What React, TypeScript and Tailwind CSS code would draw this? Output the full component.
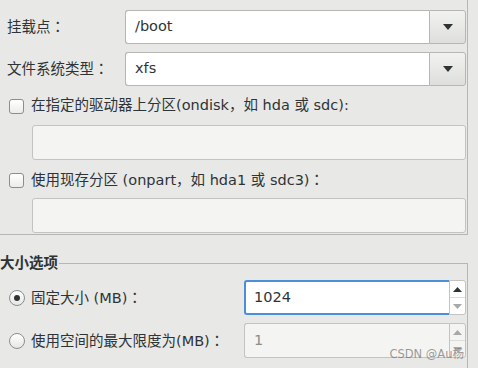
import React from "react";

const FONT = { fontFamily: '"DejaVu Sans", "Noto Sans CJK SC", sans-serif' };

function Colon() {
  return <span style={{ fontFamily: '"Noto Sans CJK TC", sans-serif' }}>：</span>;
}

function ComboArrow() {
  return (
    <svg width="10" height="6" viewBox="0 0 10 6">
      <path d="M0 0 H10 L5 6 Z" fill="#2e3436" />
    </svg>
  );
}

function Combo({ value }: { value: string }) {
  return (
    <div className="flex h-[34px] w-[341px]">
      <div className="flex-1 flex items-center pl-[9px] bg-white border border-[#b6b6b3] border-r-0 rounded-l-[3px] text-[#2e3436]">
        {value}
      </div>
      <div className="w-[37px] flex items-center justify-center border border-[#b6b6b3] rounded-r-[3px] bg-gradient-to-b from-[#f2f2f1] to-[#dededc]">
        <ComboArrow />
      </div>
    </div>
  );
}

function Checkbox() {
  return (
    <div className="w-[15px] h-[15px] rounded-[3px] border border-[#8b8e8f] bg-gradient-to-b from-white to-[#ececea] shrink-0" />
  );
}

function Radio({ checked }: { checked?: boolean }) {
  return (
    <div className="w-[16px] h-[16px] rounded-full border border-[#8b8e8f] bg-gradient-to-b from-white to-[#e6e6e4] shrink-0 flex items-center justify-center">
      {checked && <div className="w-[6px] h-[6px] rounded-full bg-[#2e3436]" />}
    </div>
  );
}

function Spin({ value, focused }: { value: string; focused?: boolean }) {
  return (
    <div className="flex h-[35px] w-[222px]">
      <div
        className={
          focused
            ? "flex-1 flex items-center pl-[8px] bg-white border-2 border-r-0 border-[#4a90d9] rounded-l-[3px] text-[#2e3436]"
            : "flex-1 flex items-center pl-[9px] bg-[#f4f4f3] border border-r-0 border-[#c3c3c0] rounded-l-[3px] text-[#8b8e8f]"
        }
      >
        {value}
      </div>
      <div
        className={
          focused
            ? "w-[17px] flex flex-col border border-[#c3c3c0] rounded-r-[3px] bg-white"
            : "w-[17px] flex flex-col border border-[#c3c3c0] rounded-r-[3px] bg-[#f4f4f3]"
        }
      >
        <div className="flex-1 flex items-center justify-center border-b border-[#dcdcda]">
          <svg width="9" height="5" viewBox="0 0 9 5">
            <path d="M0 5 H9 L4.5 0 Z" fill={focused ? "#2e3436" : "#a8a8a6"} />
          </svg>
        </div>
        <div className="flex-1 flex items-center justify-center">
          <svg width="9" height="5" viewBox="0 0 9 5">
            <path d="M0 0 H9 L4.5 5 Z" fill="#a8a8a6" />
          </svg>
        </div>
      </div>
    </div>
  );
}

export default function App() {
  return (
    <div
      className="relative w-[478px] h-[368px] overflow-hidden bg-[#e8e8e7] text-[14.5px] text-[#2e3436]"
      style={FONT}
    >
      <div className="w-[468px] h-[235px] border-r border-b border-[#b6b6b3] pt-[10px] pr-[1px] flex flex-col">
        <div className="flex items-center justify-between pl-[7px]">
          <span>挂载点<Colon /></span>
          <Combo value="/boot" />
        </div>
        <div className="flex items-center justify-between pl-[7px] mt-[8px]">
          <span>文件系统类型<Colon /></span>
          <Combo value="xfs" />
        </div>
        <div className="flex items-center gap-[7px] pl-[9px] h-[20px] mt-[10px]">
          <Checkbox />
          <span>在指定的驱动器上分区(ondisk，如 hda 或 sdc):</span>
        </div>
        <div className="ml-[32px] mt-[9px] h-[35px] bg-[#f4f4f3] border border-[#c3c3c0] rounded-[3px]" />
        <div className="flex items-center gap-[7px] pl-[9px] h-[20px] mt-[10px]">
          <Checkbox />
          <span>使用现存分区 (onpart，如 hda1 或 sdc3)<Colon /></span>
        </div>
        <div className="ml-[32px] mt-[8px] h-[35px] bg-[#f4f4f3] border border-[#c3c3c0] rounded-[3px]" />
      </div>

      <div className="w-[468px] mt-[18px]">
        <div className="flex h-[20px]">
          <span className="font-bold leading-[20px] pr-[1px]">大小选项</span>
          <div className="flex-1 self-end h-[10px] border-t border-r border-[#b6b6b3]" />
        </div>
        <div className="border-r border-[#b6b6b3] pt-[7px] pr-[1px] h-[100px] flex flex-col gap-[8px]">
          <div className="flex items-center justify-between">
            <div className="flex items-center gap-[6px] pl-[9px]">
              <Radio checked />
              <span>固定大小 (MB)<Colon /></span>
            </div>
            <Spin value="1024" focused />
          </div>
          <div className="flex items-center justify-between">
            <div className="flex items-center gap-[6px] pl-[9px]">
              <Radio />
              <span>使用空间的最大限度为(MB)<Colon /></span>
            </div>
            <Spin value="1" />
          </div>
        </div>
      </div>

      <div className="absolute right-[14px] bottom-[8px] text-[11.5px] leading-none text-[#6f6f6f]/70">
        CSDN @Au杨
      </div>
    </div>
  );
}
